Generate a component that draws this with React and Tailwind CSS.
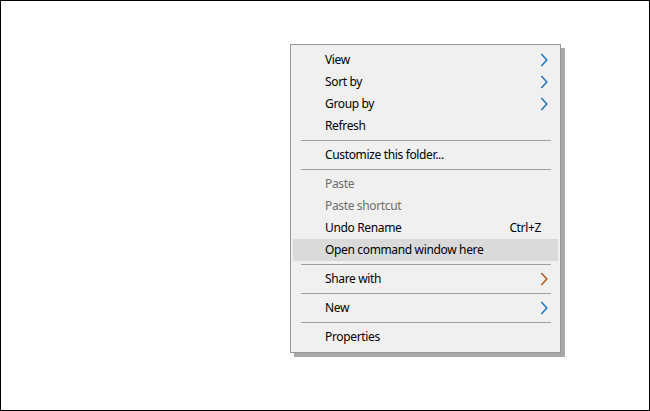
import React from "react";

const items = [
  { label: "View", arrow: "blue" },
  { label: "Sort by", arrow: "blue" },
  { label: "Group by", arrow: "blue" },
  { label: "Refresh" },
  { sep: true },
  { label: "Customize this folder..." },
  { sep: true },
  { label: "Paste", disabled: true },
  { label: "Paste shortcut", disabled: true },
  { label: "Undo Rename", shortcut: "Ctrl+Z" },
  { label: "Open command window here", active: true },
  { sep: true },
  { label: "Share with", arrow: "orange" },
  { sep: true },
  { label: "New", arrow: "blue" },
  { sep: true },
  { label: "Properties" },
];

function Chevron({ tone }) {
  const main = tone === "orange" ? "#9a4a1c" : "#1d5fa8";
  const edge = tone === "orange" ? "#d07a2c" : "#3f8fdc";
  return (
    <svg width="8" height="14" viewBox="0 0 8 14" className="block">
      <path d="M1.5 1 L7 7 L1.5 13" fill="none" stroke={edge} strokeWidth="1.4" />
      <path d="M1 1 L6.5 7 L1 13" fill="none" stroke={main} strokeWidth="1" />
    </svg>
  );
}

export default function App() {
  return (
    <div
      className="w-[650px] h-[411px] border border-black bg-white flex items-start"
      style={{ fontFamily: '"Segoe UI", "Noto Sans", "Open Sans", sans-serif' }}
    >
      {/* Context menu */}
      <div className="ml-[289px] mt-[43px] w-[271px] bg-[#f0f0f0] border border-[#979797] pt-[4px] pb-[4px] px-[2px] shadow-[4px_4px_0_0_#a8a8a8]">
        {items.map((it, i) =>
          it.sep ? (
            <div key={i} className="h-[7px] flex items-center pl-[8px] pr-[7px]">
              <div className="h-px w-full bg-[#a0a0a0]" />
            </div>
          ) : (
            <div
              key={i}
              className={`h-[22px] flex items-center pl-[32px] pr-[10px] text-[12px] tracking-[-0.35px] ${
                it.active ? "bg-[#dadada]" : ""
              } ${it.disabled ? "text-[#6d6d6d]" : "text-black"}`}
            >
              <span className="flex-1">{it.label}</span>
              {it.shortcut && <span className="mr-[7px]">{it.shortcut}</span>}
              {it.arrow && <Chevron tone={it.arrow} />}
            </div>
          )
        )}
      </div>
    </div>
  );
}
